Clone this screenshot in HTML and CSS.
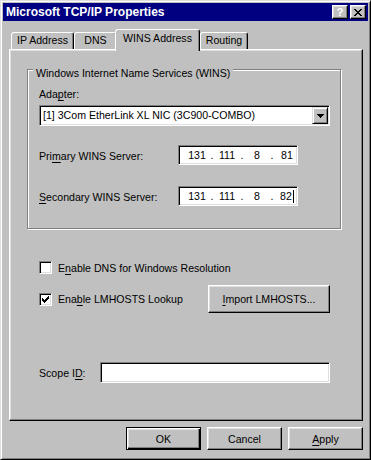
FILE: index.html
```html
<!DOCTYPE html>
<html lang="en">
<head>
    <meta charset="UTF-8">
    <meta name="viewport" content="width=device-width, initial-scale=1.0">
    <title>Microsoft TCP/IP Properties</title>
    <link rel="stylesheet" href="styles.css">
</head>
<body>
    <div class="window">
        <div class="titlebar">
            <span class="title">Microsoft TCP/IP Properties</span>
            <div class="title-buttons">
                <button class="cap-btn help">?</button>
                <button class="cap-btn close">
                    <svg width="8" height="7" viewBox="0 0 8 7"><path d="M0 0h2v1h-2z M6 0h2v1h-2z M1 1h2v1h-2z M5 1h2v1h-2z M2 2h4v1h-4z M3 3h2v1h-2z M2 4h4v1h-4z M1 5h2v1h-2z M5 5h2v1h-2z M0 6h2v1h-2z M6 6h2v1h-2z" fill="#000"/></svg>
                </button>
            </div>
        </div>

        <div class="tabs">
            <div class="tab tab-ip">IP Address</div>
            <div class="tab tab-dns">DNS</div>
            <div class="tab tab-wins active">WINS Address</div>
            <div class="tab tab-routing">Routing</div>
        </div>

        <div class="panel">
            <div class="group">
                <span class="legend">Windows Internet Name Services (WINS)</span>
                <div class="label">Ada<u>p</u>ter:</div>
                <div class="select">
                    <span class="select-text">[1] 3Com EtherLink XL NIC (3C900-COMBO)</span>
                    <span class="select-arrow">
                        <svg width="7" height="4" viewBox="0 0 7 4"><path d="M0 0h7v1h-7z M1 1h5v1h-5z M2 2h3v1h-3z M3 3h1v1h-1z" fill="#000"/></svg>
                    </span>
                </div>
                <div class="ip-row primary">
                    <span class="ip-label">Pri<u>m</u>ary WINS Server:</span>
                    <div class="ip-box">
                        <span class="octet">131</span><span class="dot">.</span>
                        <span class="octet">111</span><span class="dot">.</span>
                        <span class="octet">8</span><span class="dot">.</span>
                        <span class="octet">81</span>
                    </div>
                </div>
                <div class="ip-row secondary">
                    <span class="ip-label"><u>S</u>econdary WINS Server:</span>
                    <div class="ip-box">
                        <span class="octet">131</span><span class="dot">.</span>
                        <span class="octet">111</span><span class="dot">.</span>
                        <span class="octet">8</span><span class="dot">.</span>
                        <span class="octet">82<span class="caret"></span></span>
                    </div>
                </div>
            </div>

            <div class="options">
                <div class="check-row dns">
                    <span class="checkbox"></span>
                    <span>E<u>n</u>able DNS for Windows Resolution</span>
                </div>
                <div class="check-row lmhosts">
                    <span class="checkbox">
                        <svg width="7" height="7" viewBox="0 0 7 7"><path d="M6 0h1v1h-1z M5 1h2v1h-2z M0 2h1v1h-1z M4 2h3v1h-3z M0 3h2v1h-2z M3 3h3v1h-3z M0 4h5v1h-5z M1 5h3v1h-3z M2 6h1v1h-1z" fill="#000"/></svg>
                    </span>
                    <span>Ena<u>b</u>le LMHOSTS Lookup</span>
                    <button class="btn import-btn"><u>I</u>mport LMHOSTS...</button>
                </div>
                <div class="scope-row">
                    <span>Scope I<u>D</u>:</span>
                    <div class="scope-input"></div>
                </div>
            </div>
        </div>

        <div class="buttons">
            <button class="btn default">OK</button>
            <button class="btn">Cancel</button>
            <button class="btn"><u>A</u>pply</button>
        </div>
    </div>
</body>
</html>
```

FILE: styles.css
```css
* {
    box-sizing: border-box;
}
body {
    margin: 0;
    background-color: #c0c0c0;
    font-family: "Liberation Sans", Arial, sans-serif;
    font-size: 10.6px;
    color: #000;
}
button {
    font: inherit;
    color: inherit;
    padding: 0;
    margin: 0;
    cursor: default;
    outline: none;
}
u {
    text-underline-offset: 2px;
}

/* window frame */
.window {
    width: 371px;
    height: 460px;
    background-color: #c0c0c0;
    border: 1px solid;
    border-color: #dfdfdf #000 #000 #dfdfdf;
    box-shadow: inset 1px 1px #fff, inset -1px -1px #808080;
    padding: 2px;
}
.titlebar {
    height: 18px;
    background-color: #000080;
    color: #fff;
    display: flex;
    align-items: center;
    justify-content: space-between;
    padding: 0 2px 0 3px;
}
.title {
    font-weight: bold;
    font-size: 12px;
    line-height: 18px;
}
.title-buttons {
    display: flex;
    gap: 2px;
}
.cap-btn {
    width: 16px;
    height: 14px;
    background-color: #c0c0c0;
    border: 1px solid;
    border-color: #fff #000 #000 #fff;
    box-shadow: inset -1px -1px #808080, inset 1px 1px #dfdfdf;
    display: flex;
    align-items: center;
    justify-content: center;
}
.cap-btn.help {
    font-weight: bold;
    font-size: 11px;
    line-height: 12px;
}

/* tabs */
.tabs {
    display: flex;
    align-items: flex-end;
    height: 20px;
    margin-top: 8px;
    padding-left: 8px;
}
.tab {
    height: 17px;
    padding-top: 1px;
    line-height: 13px;
    text-align: center;
    background-color: #c0c0c0;
    border: 1px solid;
    border-bottom: none;
    border-color: #fff #000 transparent #fff;
    border-radius: 3px 3px 0 0;
    box-shadow: inset -1px 0 #808080;
}
.tab-ip { width: 63px; }
.tab-dns { width: 43px; }
.tab-wins { width: 85px; }
.tab-routing { width: 48px; }
.tab.active {
    height: 22px;
    padding-top: 2px;
    margin-left: -2px;
    margin-bottom: -2px;
    position: relative;
    z-index: 1;
}

/* tab page */
.panel {
    width: 354px;
    height: 372px;
    margin-left: 6px;
    border: 1px solid;
    border-color: #fff #000 #000 #fff;
    box-shadow: inset -1px -1px #808080, inset 1px 1px #dfdfdf;
    padding: 19px 0 0 17px;
}
.group {
    position: relative;
    width: 314px;
    height: 160px;
    border: 1px solid #808080;
    box-shadow: 1px 1px #fff, inset 1px 1px #fff;
    padding: 18px 0 0 11px;
}
.legend {
    position: absolute;
    top: -3px;
    left: 5px;
    padding: 0 3px;
    line-height: 13px;
    background-color: #c0c0c0;
}
.label {
    line-height: 13px;
}
.select, .ip-box, .scope-input, .checkbox {
    background-color: #fff;
    border: 1px solid;
    border-color: #808080 #fff #fff #808080;
    box-shadow: inset 1px 1px #000, inset -1px -1px #dfdfdf;
}
.select {
    width: 291px;
    height: 21px;
    margin-top: 4px;
    display: flex;
    align-items: center;
    justify-content: space-between;
    padding: 0 1px 0 3px;
    line-height: 13px;
}
.select-arrow {
    width: 16px;
    height: 17px;
    background-color: #c0c0c0;
    border: 1px solid;
    border-color: #dfdfdf #000 #000 #dfdfdf;
    box-shadow: inset 1px 1px #fff, inset -1px -1px #808080;
    display: flex;
    align-items: center;
    justify-content: center;
}
.ip-row {
    display: flex;
    align-items: center;
    height: 20px;
}
.ip-row.primary { margin-top: 19px; }
.ip-row.secondary { margin-top: 21px; }
.ip-label {
    width: 139px;
    padding-top: 2px;
}
.ip-box {
    width: 120px;
    height: 20px;
    display: flex;
    align-items: center;
    padding-left: 7px;
    overflow: hidden;
    line-height: 13px;
}
.octet {
    flex: none;
    width: 22px;
    text-align: center;
}
.dot {
    flex: none;
    width: 8px;
    text-align: center;
}
.caret {
    display: inline-block;
    width: 1px;
    height: 13px;
    margin-left: 1px;
    background-color: #000;
    vertical-align: top;
}

/* lower options */
.options {
    width: 291px;
    margin-left: 12px;
}
.check-row {
    display: flex;
    align-items: center;
}
.check-row.dns {
    height: 13px;
    margin-top: 32px;
}
.check-row.lmhosts {
    height: 28px;
    margin-top: 11px;
}
.checkbox {
    width: 13px;
    height: 13px;
    margin-right: 6px;
    display: flex;
    align-items: center;
    justify-content: center;
}
.btn {
    height: 23px;
    width: 75px;
    background-color: #c0c0c0;
    border: 1px solid;
    border-color: #fff #000 #000 #fff;
    box-shadow: inset -1px -1px #808080, inset 1px 1px #dfdfdf;
    text-align: center;
}
.import-btn {
    width: 122px;
    height: 28px;
    margin-left: auto;
}
.scope-row {
    display: flex;
    align-items: center;
    height: 21px;
    margin-top: 49px;
}
.scope-input {
    width: 230px;
    height: 21px;
    margin-left: auto;
}

/* dialog buttons */
.buttons {
    display: flex;
    justify-content: flex-end;
    gap: 6px;
    width: 354px;
    margin: 6px 0 0 6px;
}
.btn.default {
    border: 1px solid #000;
    box-shadow: inset 1px 1px #fff, inset -1px -1px #000, inset -2px -2px #808080, inset 2px 2px #dfdfdf;
}
```
